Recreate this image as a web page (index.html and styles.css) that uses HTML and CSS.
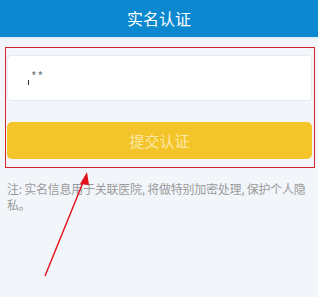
FILE: index.html
```html
<!DOCTYPE html>
<html lang="zh-CN">
<head>
    <meta charset="UTF-8">
    <meta name="viewport" content="width=device-width, initial-scale=1.0">
    <title>实名认证</title>
    <link rel="stylesheet" href="styles.css">
</head>
<body>

<div class="header">实名认证</div>

<div class="highlight">
    <div class="id-input">
        <span class="cursor"></span><span class="masked">**</span>
    </div>
    <div class="submit-btn">提交认证</div>
</div>

<p class="note">注: 实名信息用于关联医院, 将做特别加密处理, 保护个人隐私。</p>

<!-- annotation arrow -->
<svg class="arrow" width="318" height="297" viewBox="0 0 318 297">
    <line x1="45" y1="276" x2="84" y2="180" stroke="#e3121c" stroke-width="1.4"/>
    <polygon points="87,172 80,184 89,185" fill="#e3121c"/>
</svg>

</body>
</html>
```

FILE: styles.css
```css
body {
    margin: 0;
    width: 318px;
    height: 297px;
    background-color: #f2f6fa;
    font-family: "Noto Sans CJK SC", "Noto Sans", sans-serif;
    position: relative;
    overflow: hidden;
}

/* Top bar */
.header {
    height: 37px;
    line-height: 37px;
    background-color: #0b88cf;
    border-bottom: 2px solid #e2eef7;
    color: #fff;
    font-size: 16px;
    text-align: center;
}

/* Red annotation box round the form */
.highlight {
    margin: 8px 3px 0 5px;
    padding: 7px 2px 8px 1px;
    border: 1px solid #d3242c;
    display: flex;
    flex-direction: column;
    gap: 21px;
}

.id-input {
    height: 44px;
    background-color: #fff;
    border: 1px solid #e6eaee;
    border-radius: 4px;
    padding-left: 20px;
    display: flex;
    align-items: center;
    gap: 2px;
}

.cursor {
    width: 1px;
    height: 5px;
    background-color: #333;
    margin-top: 8px;
}

.masked {
    color: #777;
    font-size: 12px;
    letter-spacing: 1px;
    margin-top: -6px;
}

.submit-btn {
    height: 37px;
    line-height: 37px;
    background-color: #f4c42b;
    border-radius: 5px;
    color: #fce8a8;
    font-size: 15px;
    text-align: center;
}

.note {
    margin: 13px 2px 0 7px;
    color: #9a9a9a;
    font-size: 12px;
    line-height: 16px;
    letter-spacing: -0.25px;
}

.arrow {
    position: absolute;
    left: 0;
    top: 0;
}
```
